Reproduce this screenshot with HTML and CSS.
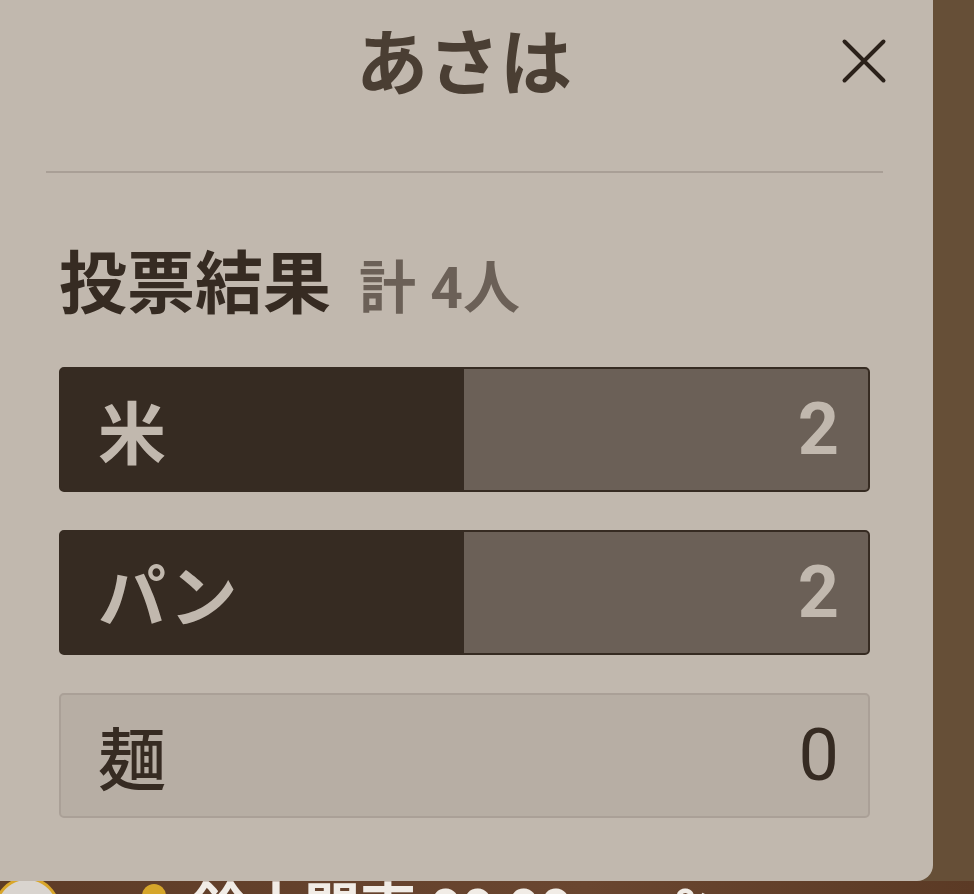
FILE: index.html
```html
<!DOCTYPE html>
<html lang="ja">
<head>
<meta charset="utf-8">
<title>あさは</title>
<link rel="stylesheet" href="styles.css">
</head>
<body>
<div class="page">
  <div class="page-main"></div>
  <div class="page-footer">
    <div class="avatar"></div>
    <div class="bell"></div>
    <div class="footer-name">鈴木開東 99 99 。o%</div>
  </div>
</div>

<div class="modal">
  <header class="modal-header">
    <h1 class="modal-title">あさは</h1>
    <button class="close-btn" aria-label="閉じる">
      <svg width="46" height="46" viewBox="0 0 46 46"><path d="M3.5 3.5 L42.5 42.5 M42.5 3.5 L3.5 42.5" stroke="#2b211a" stroke-width="4" stroke-linecap="round" fill="none"/></svg>
    </button>
  </header>
  <hr class="divider">
  <section class="results">
    <h2 class="results-title">投票結果<span class="results-total">計 4人</span></h2>
    <ul class="options">
      <li class="option option-voted" style="--pct:50%"><span class="option-label">米</span><span class="option-count">2</span></li>
      <li class="option option-voted" style="--pct:50%"><span class="option-label">パン</span><span class="option-count">2</span></li>
      <li class="option option-empty"><span class="option-label">麺</span><span class="option-count">0</span></li>
    </ul>
  </section>
</div>
</body>
</html>
```

FILE: styles.css
```css
* { box-sizing: border-box; }
html, body { margin: 0; padding: 0; }
body {
  width: 974px;
  height: 894px;
  overflow: hidden;
  background: #664f37;
  font-family: Roboto, "Noto Sans CJK JP", sans-serif;
}

.page {
  display: flex;
  flex-direction: column;
  height: 894px;
}
.page-main { flex: 0 0 881px; background: #664f37; }
.page-footer {
  flex: 1;
  display: flex;
  align-items: flex-start;
  background: linear-gradient(to right, #5e3c27, #6a4630 60%, #5b3a25);
  overflow: hidden;
}
.avatar {
  width: 66px; height: 66px;
  margin-left: -6px;
  margin-top: -4px;
  border-radius: 50%;
  background: #d9d4cf;
  border: 3px solid #d9a62a;
  flex: none;
}
.bell {
  width: 24px; height: 30px;
  margin-left: 82px;
  margin-top: 3px;
  background: #d6a62a;
  border-radius: 12px 12px 4px 4px;
  flex: none;
}
.footer-name {
  margin-left: 26px;
  margin-top: 1px;
  color: #f1ece6;
  font-weight: 700;
  font-size: 56px;
  line-height: 56px;
  white-space: nowrap;
}

.modal {
  position: fixed;
  top: 0;
  left: 0;
  width: 933px;
  height: 881px;
  background: #c1b8ae;
  border-radius: 0 0 16px 0;
  padding: 23px 63px 0 46px;
}

.modal-header {
  position: relative;
  display: flex;
  justify-content: center;
  height: 148px;
}
.modal-title {
  margin: 0;
  font-family: "Noto Sans CJK JP", sans-serif;
  font-weight: 700;
  font-size: 72px;
  line-height: 70px;
  color: #4a3e33;
  padding-left: 12px;
}
.close-btn {
  position: absolute;
  right: -17px;
  top: 15px;
  width: 46px; height: 46px;
  padding: 0;
  border: 0;
  background: none;
  display: block;
}
.close-btn svg { display: block; }

.divider {
  margin: 0 -13px 0 0;
  border: 0;
  height: 2px;
  background: #a99f96;
}

.results {
  padding: 72px 0 0 13px;
}
.results-title {
  margin: 0;
  display: flex;
  align-items: baseline;
  font-family: "Noto Sans CJK JP", sans-serif;
  font-weight: 700;
  font-size: 68px;
  line-height: 68px;
  color: #362b22;
}
.results-total {
  margin-left: 28px;
  font-family: Roboto, "Noto Sans CJK JP", sans-serif;
  font-size: 57px;
  line-height: 57px;
  font-weight: 700;
  color: #6b6057;
}

.options {
  list-style: none;
  margin: 50px 0 0;
  padding: 0;
  display: flex;
  flex-direction: column;
  gap: 38px;
}
.option {
  height: 125px;
  border-radius: 5px;
  display: flex;
  align-items: center;
  justify-content: space-between;
  padding: 0 31px 0 37px;
}
.option-voted {
  border: 2px solid #362b22;
  background: linear-gradient(to right, #362b22 var(--pct), #6b6057 var(--pct));
  color: #c1b8ae;
}
.option-empty {
  border: 2px solid #aaa097;
  background: #b7aea4;
  color: #362b22;
}
.option-label {
  font-family: "Noto Sans CJK JP", sans-serif;
  font-size: 68px;
  line-height: 68px;
  font-weight: 700;
}
.option-count {
  font-family: Roboto, sans-serif;
  font-size: 72px;
  line-height: 72px;
  font-weight: 700;
  margin-right: -2px;
}
.option-empty .option-label { font-weight: 500; }
.option-empty .option-count { font-weight: 400; }
```
